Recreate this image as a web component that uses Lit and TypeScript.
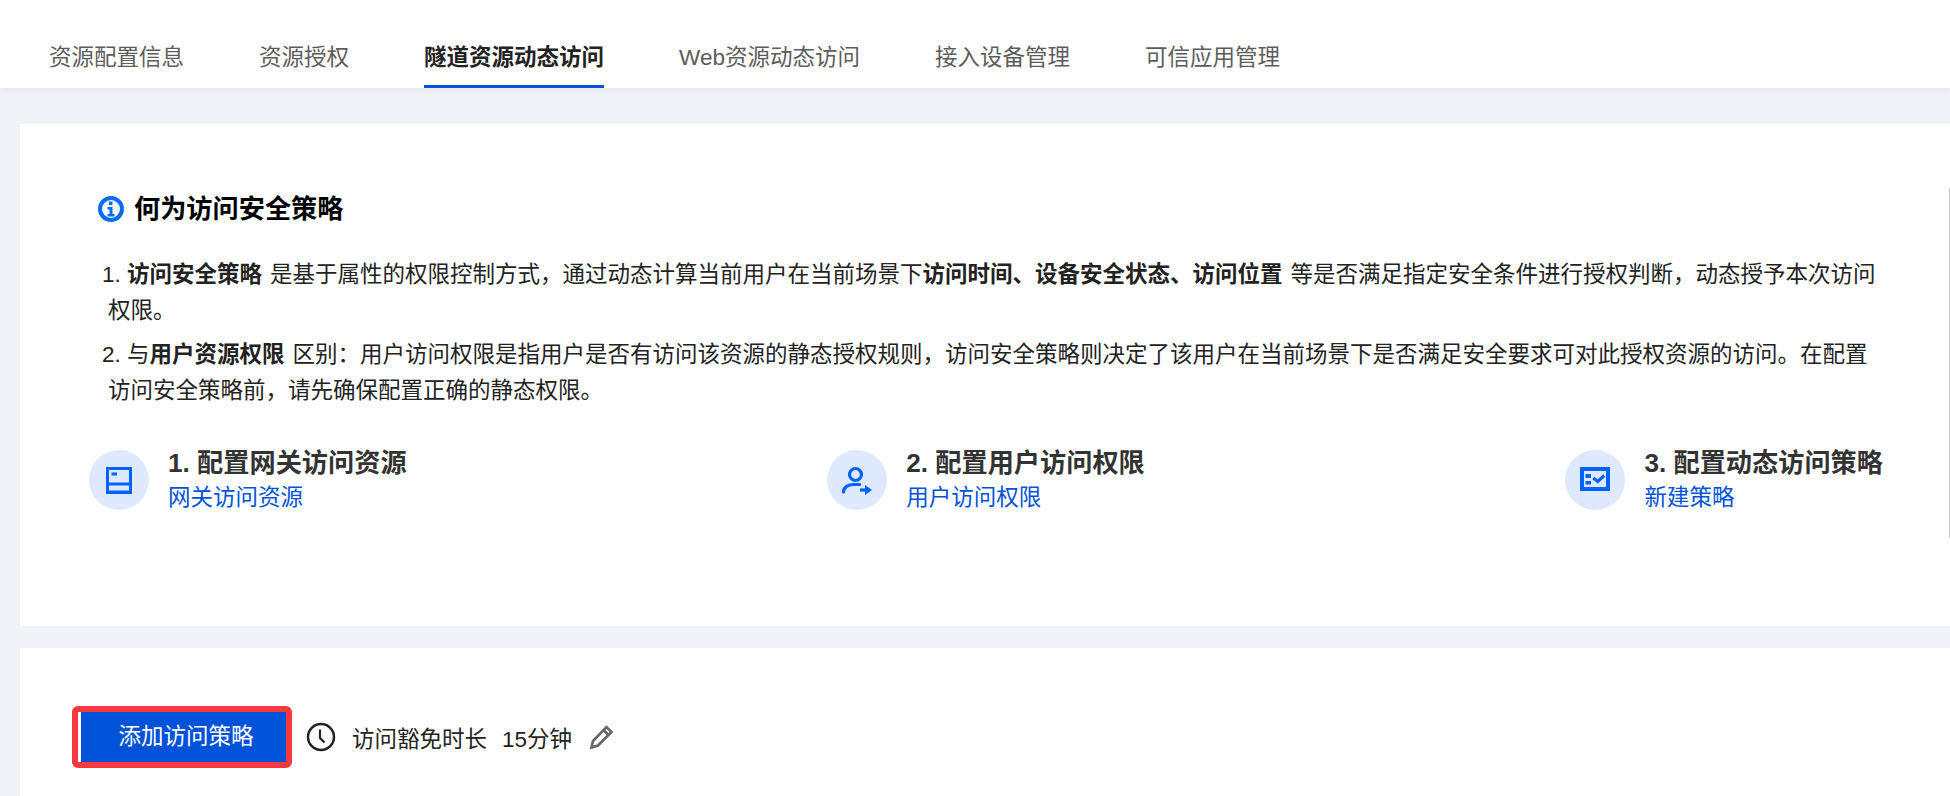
import { LitElement, html, css, svg } from "lit";
import { customElement } from "lit/decorators.js";

const tabs = ["资源配置信息", "资源授权", "隧道资源动态访问", "Web资源动态访问", "接入设备管理", "可信应用管理"];

const B = "#0063ff";
const L = "#dfe9fe";
const icon1 = svg`<rect x="17" y="17" width="26" height="27" fill="${B}"/><rect x="20" y="20" width="20" height="12.500" fill="${L}"/><rect x="20" y="35.500" width="20" height="5" fill="${L}"/><rect x="22.500" y="22.500" width="5.500" height="3" fill="${B}"/>`;
const icon2 = svg`<circle cx="28.500" cy="24.500" r="6" fill="none" stroke="${B}" stroke-width="3.200"/><path d="M16.500 42c0-5 5-7.500 10-7.500h6" fill="none" stroke="${B}" stroke-width="3.200" stroke-linecap="round"/><path d="M33 40h6" stroke="${B}" stroke-width="3.200"/><path d="M38 35l7 5-7 5z" fill="${B}"/>`;
const icon3 = svg`<rect x="17" y="19" width="26" height="20" fill="${L}" stroke="${B}" stroke-width="4"/><rect x="20.500" y="24" width="5.500" height="4" fill="${B}"/><rect x="20.500" y="31" width="5.500" height="3.500" fill="${B}"/><path d="M28.300 28l4.500 3.500 6.500-6" fill="none" stroke="${B}" stroke-width="3.200"/>`;

const steps = [
  { title: "1. 配置网关访问资源", link: "网关访问资源", icon: icon1 },
  { title: "2. 配置用户访问权限", link: "用户访问权限", icon: icon2 },
  { title: "3. 配置动态访问策略", link: "新建策略", icon: icon3 },
];

@customElement("app-root")
export class AppRoot extends LitElement {
  static styles = css`
    :host {
      display: block;
      position: relative;
      height: 796px;
      overflow: hidden;
      background: #f2f3f8;
      font-family: "Liberation Sans", "Noto Sans CJK SC", sans-serif;
      font-size: 22.5px;
      color: #222;
    }
    .tabs {
      display: flex;
      gap: 75px;
      height: 88px;
      padding-left: 49px;
      box-sizing: border-box;
      background: #fff;
      box-shadow: 0 2px 8px rgba(0, 0, 0, 0.07);
    }
    .tab {
      height: 88px;
      box-sizing: border-box;
      padding-top: 41px;
      line-height: 34px;
      color: #5c5c5c;
      white-space: nowrap;
    }
    .tab.active {
      color: #222;
      font-weight: 700;
      border-bottom: 3px solid #0052d9;
    }
    .intro {
      margin: 36px 0 22px 20px;
      height: 502px;
      box-sizing: border-box;
      background: #fff;
      padding: 65px 67px 0 69px;
    }
    .title {
      display: flex;
      align-items: center;
      gap: 10px;
      margin-left: 9px;
      height: 40px;
      font-size: 26.2px;
      font-weight: 700;
      color: #000;
    }
    .title span {
      position: relative;
      top: -2px;
    }
    .list {
      margin: 28px 0 0;
      padding: 0 0 0 19px;
      list-style: none;
      line-height: 36px;
      color: #222;
    }
    .list li {
      margin-bottom: 8px;
      text-indent: -6px;
    }
    .num {
      display: inline-block;
      width: 25px;
      text-indent: 0;
    }
    .gap {
      display: inline-block;
      width: 8px;
    }
    .steps {
      display: flex;
      justify-content: space-between;
      margin-top: 36px;
    }
    .step {
      display: flex;
      gap: 19px;
      align-items: center;
    }
    .circle {
      width: 60px;
      height: 60px;
      flex: none;
      border-radius: 50%;
      background: #dfe9fe;
    }
    .circle svg {
      display: block;
    }
    .step-title {
      font-size: 26.2px;
      font-weight: 700;
      line-height: 36px;
      color: #333;
      white-space: nowrap;
    }
    .step-link {
      color: #0052d9;
      line-height: 34px;
    }
    .actions {
      height: 148px;
      box-sizing: border-box;
      margin-left: 20px;
      background: #fff;
      padding: 58px 0 28px 52px;
      display: flex;
      align-items: center;
    }
    .bar {
      display: flex;
      align-items: center;
      height: 62px;
    }
    .btn {
      width: 220px;
      height: 62px;
      box-sizing: border-box;
      border: 6px solid #f9393f;
      border-radius: 6px;
      background: #fff;
      padding: 0 0 0 3px;
      display: flex;
    }
    .btn span {
      flex: 1;
      background: #0052d9;
      color: #fff;
      line-height: 50px;
      padding-left: 5px;
      text-align: center;
    }
    .clock {
      margin-left: 14px;
      flex: none;
    }
    .label {
      margin-left: 16px;
      color: #222;
    }
    .value {
      margin-left: 15px;
    }
    .pencil {
      margin-left: 17px;
      flex: none;
    }
    .edge {
      position: absolute;
      right: 0;
      top: 188px;
      width: 1px;
      height: 350px;
      background: #c8c8c8;
    }
  `;

  render() {
    return html`
      <div class="tabs">
        ${tabs.map((t, i) => html`<div class="tab ${i === 2 ? "active" : ""}">${t}</div>`)}
      </div>
      <section class="intro">
        <div class="title">
          <svg width="26" height="26" viewBox="0 0 26 26">
            <circle cx="13" cy="13" r="11" fill="none" stroke="#0a6cff" stroke-width="4" />
            <path d="M9.500 11h5v7h2v2.500h-7V18h2v-4.500h-2z" fill="#0a6cff" />
            <rect x="11" y="5.500" width="3.500" height="3.500" fill="#0a6cff" />
          </svg>
          <span>何为访问安全策略</span>
        </div>
        <ol class="list">
          <li>
            <span class="num">1.</span><b>访问安全策略</b><span class="gap"></span>是基于属性的权限控制方式，通过动态计算当前用户在当前场景下<b>访问时间、设备安全状态、访问位置</b><span class="gap"></span>等是否满足指定安全条件进行授权判断，动态授予本次访问权限。
          </li>
          <li>
            <span class="num">2.</span>与<b>用户资源权限</b><span class="gap"></span>区别：用户访问权限是指用户是否有访问该资源的静态授权规则，访问安全策略则决定了该用户在当前场景下是否满足安全要求可对此授权资源的访问。在配置访问安全策略前，请先确保配置正确的静态权限。
          </li>
        </ol>
        <div class="steps">
          ${steps.map(
            (s) => html`<div class="step">
              <div class="circle"><svg width="60" height="60" viewBox="0 0 60 60">${s.icon}</svg></div>
              <div>
                <div class="step-title">${s.title}</div>
                <div class="step-link">${s.link}</div>
              </div>
            </div>`
          )}
        </div>
      </section>
      <section class="actions">
        <div class="bar">
          <div class="btn"><span>添加访问策略</span></div>
          <svg class="clock" width="30" height="30" viewBox="0 0 30 30" fill="none" stroke="#222" stroke-width="2.500">
            <circle cx="15" cy="15" r="13" />
            <path d="M14 7.500v8.500l4.500 4.500" stroke-width="2.200" />
          </svg>
          <span class="label">访问豁免时长</span>
          <span class="value">15分钟</span>
          <svg class="pencil" width="26" height="26" viewBox="0 0 26 26" fill="none" stroke="#666" stroke-width="2.600">
            <path d="M2.500 23.500l1.500-6.500L17.500 3l5 5L9 21.500z" />
            <path d="M14.500 6l5 5" />
          </svg>
        </div>
      </section>
      <div class="edge"></div>
    `;
  }
}
